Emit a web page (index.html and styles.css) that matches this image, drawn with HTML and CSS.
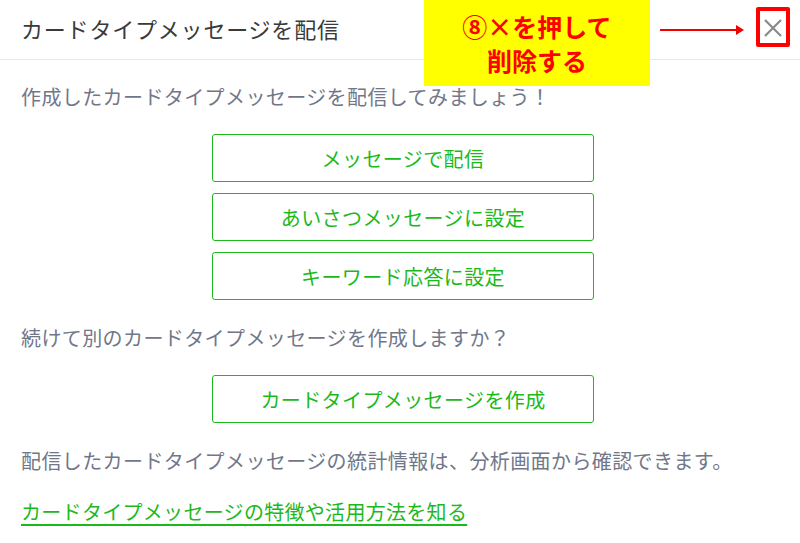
FILE: index.html
```html
<!DOCTYPE html>
<html lang="ja">
<head>
<meta charset="utf-8">
<link rel="stylesheet" href="styles.css">
</head>
<body>
<div class="modal">
  <header class="head">
    <h1 class="title">カードタイプメッセージを配信</h1>
    <button class="close" aria-label="close">
      <svg width="20" height="20" viewBox="0 0 20 20"><path d="M2 2L18 18M18 2L2 18" stroke="#8a8a8a" stroke-width="2.2" fill="none"/></svg>
    </button>
  </header>
  <main class="body">
    <p class="txt">作成したカードタイプメッセージを配信してみましょう！</p>
    <div class="btns">
      <button class="btn">メッセージで配信</button>
      <button class="btn">あいさつメッセージに設定</button>
      <button class="btn">キーワード応答に設定</button>
    </div>
    <p class="txt">続けて別のカードタイプメッセージを作成しますか？</p>
    <div class="btns">
      <button class="btn">カードタイプメッセージを作成</button>
    </div>
    <p class="txt">配信したカードタイプメッセージの統計情報は、分析画面から確認できます。</p>
    <a class="link" href="#">カードタイプメッセージの特徴や活用方法を知る</a>
  </main>
  <div class="note">⑧×を押して<br>削除する</div>
  <div class="arrow"></div>
  <div class="redbox"></div>
</div>
</body>
</html>
```
FILE: styles.css
```css
* { box-sizing: border-box; }
html, body { margin: 0; padding: 0; background: #fff; }
body {
  font-family: "Noto Sans CJK JP", "Noto Sans", sans-serif;
  width: 800px;
  height: 543px;
  overflow: hidden;
}
.modal { position: relative; width: 800px; height: 543px; }
.head {
  height: 60px;
  border-bottom: 1px solid #e8e8e8;
  display: flex;
  align-items: center;
  justify-content: space-between;
  padding: 0 17px 0 21px;
}
.title {
  margin: 0;
  font-size: 22px;
  font-weight: 400;
  color: #3a3a3a;
  letter-spacing: 0.8px;
  line-height: 1;
  padding-bottom: 4px;
}
.close {
  border: 0;
  background: none;
  padding: 0;
  width: 20px;
  height: 20px;
  margin-top: -3px;
}
.body {
  padding: 22px 15px 0 21px;
  display: flex;
  flex-direction: column;
}
.txt {
  margin: 0;
  font-size: 20px;
  letter-spacing: 0.4px;
  line-height: 30px;
  color: #717789;
}
.btns {
  display: flex;
  flex-direction: column;
  align-items: center;
  gap: 11px;
  margin: 22px 0 23px;
}
.btn {
  width: 382px;
  height: 48px;
  border: 1px solid #1cb91c;
  border-radius: 3px;
  background: #fff;
  color: #1cb91c;
  font-family: inherit;
  font-size: 20px;
  letter-spacing: 0.4px;
  padding: 0;
}
.link {
  margin-top: 21px;
  font-size: 20px;
  letter-spacing: 0.3px;
  line-height: 30px;
  color: #1cb91c;
  text-decoration: underline;
  text-decoration-thickness: 2px;
  text-underline-offset: 4px;
  align-self: flex-start;
}
.note {
  position: absolute;
  left: 424px;
  top: 0;
  width: 226px;
  height: 86px;
  background: #ffff00;
  color: #ff0000;
  font-weight: 700;
  font-size: 25px;
  line-height: 34px;
  text-align: center;
  padding-top: 9px;
}
.arrow {
  position: absolute;
  left: 660px;
  top: 29px;
  width: 80px;
  height: 2px;
  background: #f00000;
}
.arrow::after {
  content: "";
  position: absolute;
  right: -4px;
  top: -4px;
  border-left: 8px solid #f00000;
  border-top: 5px solid transparent;
  border-bottom: 5px solid transparent;
}
.redbox {
  position: absolute;
  left: 756px;
  top: 7px;
  width: 34px;
  height: 40px;
  border: 4px solid #ff0000;
  border-radius: 2px;
}
```
